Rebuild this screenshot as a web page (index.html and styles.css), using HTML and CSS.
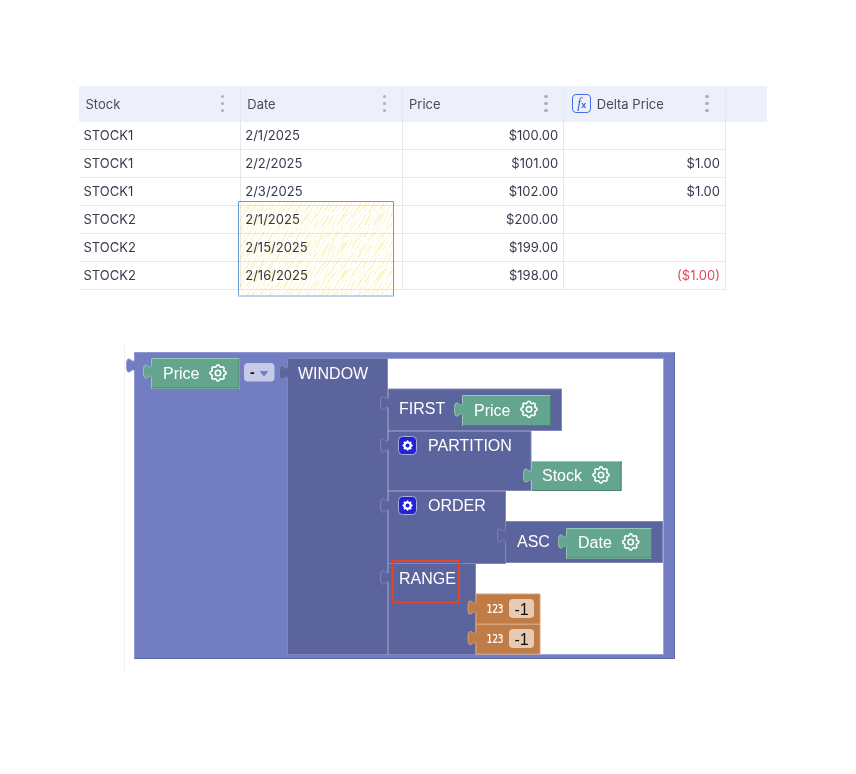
FILE: index.html
```html
<!DOCTYPE html>
<html lang="en">
<head>
<meta charset="utf-8">
<title>Delta Price</title>
<link rel="stylesheet" href="styles.css">
</head>
<body>
<section class="sheet">
  <div class="table">
    <div class="head"><span class="head-label">Stock</span><span class="dots"><i></i><i></i><i></i></span></div>
    <div class="head"><span class="head-label">Date</span><span class="dots"><i></i><i></i><i></i></span></div>
    <div class="head"><span class="head-label">Price</span><span class="dots"><i></i><i></i><i></i></span></div>
    <div class="head head-fx"><span class="fx"><em>f</em><small>x</small></span><span class="head-label">Delta Price</span><span class="dots"><i></i><i></i><i></i></span></div>
    <div class="cell">STOCK1</div><div class="cell">2/1/2025</div><div class="cell num">$100.00</div><div class="cell num"></div>
    <div class="cell">STOCK1</div><div class="cell">2/2/2025</div><div class="cell num">$101.00</div><div class="cell num">$1.00</div>
    <div class="cell">STOCK1</div><div class="cell">2/3/2025</div><div class="cell num">$102.00</div><div class="cell num">$1.00</div>
    <div class="cell">STOCK2</div><div class="cell">2/1/2025</div><div class="cell num">$200.00</div><div class="cell num"></div>
    <div class="cell">STOCK2</div><div class="cell">2/15/2025</div><div class="cell num">$199.00</div><div class="cell num"></div>
    <div class="cell">STOCK2</div><div class="cell">2/16/2025</div><div class="cell num">$198.00</div><div class="cell num neg">($1.00)</div>
  </div>
  <svg class="scribble" width="157" height="97" viewBox="0 0 157 97" aria-hidden="true">
    <defs>
      <pattern id="hatch-fine" width="9" height="13" patternUnits="userSpaceOnUse">
        <path class="hatch-fine" d="M-2 14 L7 -1M3 14 L11 1M-1 4 L1 1"/>
      </pattern>
      <pattern id="hatch-wide" width="37" height="29" patternUnits="userSpaceOnUse">
        <path class="hatch-wide" d="M3 17 L12 3M9 27 L17 14M20 12 L26 2M25 25 L33 12M31 9 L35 3M2 28 L6 22M14 8 L18 2M30 20 L36 10M16 24 L22 14"/>
      </pattern>
    </defs>
    <rect class="scribble-fine" x="1" y="1" width="154" height="94"/>
    <rect class="scribble-wide" x="1" y="1" width="154" height="94"/>
    <path class="scribble-edge" d="M0.5 94 V0.5 H155.5 V95"/>
    <path class="scribble-rough" d="M0 95 H156"/>
  </svg>
</section>

<svg class="diagram" width="856" height="340" viewBox="0 340 856 340" role="img" aria-label="Formula blocks">
  <defs>
    <path id="gear" d="M10.325 4.317c.426 -1.756 2.924 -1.756 3.35 0a1.724 1.724 0 0 0 2.573 1.066c1.543 -.94 3.31 .826 2.37 2.37a1.724 1.724 0 0 0 1.065 2.572c1.756 .426 1.756 2.924 0 3.35a1.724 1.724 0 0 0 -1.066 2.573c.94 1.543 -.826 3.31 -2.37 2.37a1.724 1.724 0 0 0 -2.572 1.065c-.426 1.756 -2.924 1.756 -3.35 0a1.724 1.724 0 0 0 -2.573 -1.066c-1.543 .94 -3.31 -.826 -2.37 -2.37a1.724 1.724 0 0 0 -1.065 -2.572c-1.756 -.426 -1.756 -2.924 0 -3.35a1.724 1.724 0 0 0 1.066 -2.573c-.94 -1.543 .826 -3.31 2.37 -2.37c1 .608 2.296 .07 2.572 -1.065z"/>
    <g id="gear-line" class="gear-line">
      <use href="#gear"/>
      <circle cx="12" cy="12" r="3"/>
    </g>
    <g id="gear-badge">
      <rect class="badge" x="0.5" y="0.5" width="18" height="18" rx="4"/>
      <g transform="translate(2.6 2.6) scale(.58)">
        <use class="gear-solid" href="#gear"/>
        <circle class="gear-hole" cx="12" cy="12" r="3.4"/>
      </g>
    </g>
  </defs>

  <line class="guide" x1="124.5" y1="345" x2="124.5" y2="672"/>

  <!-- outer minus block -->
  <path class="b-outer" d="M134.5 352.5 H674.5 V658.5 H134.5 V373 c0,-10 -8,8 -8,-7.5 s8,2.5 8,-7.5 Z"/>
  <rect class="hole" x="288" y="358.5" width="375.5" height="296"/>
  <path class="e-outer" d="M674.5 352.5 V658.5 H134.5"/>
  <path class="e-hole" d="M288 358.5 H663.5 V654.5 H288"/>

  <!-- top Price -->
  <path class="b-green" d="M151.5 358.5 H239.5 V388.5 H151.5 V379 c0,-10 -8,8 -8,-7.5 s8,2.5 8,-7.5 Z"/>
  <path class="e-green" d="M239 358.5 V388 H152"/>
  <text class="t" x="163" y="379">Price</text>
  <use href="#gear-line" transform="translate(207.2 362.2) scale(.9)"/>

  <rect class="dropdown" x="244" y="363" width="30.5" height="18.5" rx="4"/>
  <text class="t-dash" x="250" y="377">-</text>
  <path class="arrow" d="M259.5 371 H268.5 L264 376.5 Z"/>

  <!-- WINDOW -->
  <path class="b-dark" d="M287.5 358.5 H387.5 V654.5 H287.5 V380 c0,-10 -8,8 -8,-7.5 s8,2.5 8,-7.5 Z"/>
  <text class="t" x="298" y="379">WINDOW</text>

  <!-- RANGE -->
  <path class="b-dark" d="M388.5 563.5 H475.5 V654.5 H388.5 V585 c0,-10 -8,8 -8,-7.5 s8,2.5 8,-7.5 Z"/>
  <text class="t" x="399" y="584">RANGE</text>

  <!-- ORDER -->
  <path class="b-dark" d="M388.5 491.5 H505.5 V563.5 H388.5 V513 c0,-10 -8,8 -8,-7.5 s8,2.5 8,-7.5 Z"/>
  <use href="#gear-badge" transform="translate(398 496)"/>
  <text class="t" x="428" y="511">ORDER</text>

  <!-- ASC -->
  <path class="b-dark" d="M505.5 521.5 H662.5 V562.5 H505.5 V543 c0,-10 -8,8 -8,-7.5 s8,2.5 8,-7.5 Z"/>
  <text class="t" x="517" y="547">ASC</text>
  <path class="b-green" d="M566.5 528.5 H651.5 V558.5 H566.5 V549 c0,-10 -8,8 -8,-7.5 s8,2.5 8,-7.5 Z"/>
  <path class="e-green" d="M651.5 528.5 V558 H567"/>
  <text class="t" x="578" y="548">Date</text>
  <use href="#gear-line" transform="translate(619.9 531.2) scale(.9)"/>

  <!-- PARTITION -->
  <path class="b-dark" d="M388.5 431.5 H531 V490.5 H388.5 V453 c0,-10 -8,8 -8,-7.5 s8,2.5 8,-7.5 Z"/>
  <use href="#gear-badge" transform="translate(398 436)"/>
  <text class="t" x="428" y="451">PARTITION</text>
  <path class="b-green" d="M531.5 461.5 H621.5 V490.5 H531.5 V483 c0,-10 -8,8 -8,-7.5 s8,2.5 8,-7.5 Z"/>
  <path class="e-green" d="M621 461.5 V490.5 H532"/>
  <text class="t" x="542" y="481">Stock</text>
  <use href="#gear-line" transform="translate(590.2 464.2) scale(.9)"/>

  <!-- FIRST -->
  <path class="b-dark" d="M388.5 389 H561.5 V430.5 H388.5 V410.5 c0,-10 -8,8 -8,-7.5 s8,2.5 8,-7.5 Z"/>
  <text class="t" x="399" y="414">FIRST</text>
  <path class="b-green" d="M462.5 395.5 H550.5 V425.5 H462.5 V417 c0,-10 -8,8 -8,-7.5 s8,2.5 8,-7.5 Z"/>
  <path class="e-green" d="M550.5 395.5 V425.5 H463"/>
  <text class="t" x="474" y="416">Price</text>
  <use href="#gear-line" transform="translate(518.2 398.5) scale(.9)"/>

  <!-- numeric -1 blocks -->
  <path class="b-orange" d="M476 594 H540 V624 H476 V615 c0,-10 -8,8 -8,-7.5 s8,2.5 8,-7.5 Z"/>
  <text class="t-num" x="486.5" y="612.5" textLength="17" lengthAdjust="spacingAndGlyphs">123</text>
  <rect class="pill" x="509" y="599" width="25" height="19" rx="4"/>
  <text class="t-val" x="514.5" y="615">-1</text>
  <path class="b-orange" d="M476 624.5 H540 V654 H476 V645.5 c0,-10 -8,8 -8,-7.5 s8,2.5 8,-7.5 Z"/>
  <text class="t-num" x="486.5" y="642.5" textLength="17" lengthAdjust="spacingAndGlyphs">123</text>
  <rect class="pill" x="509" y="629" width="25" height="19" rx="4"/>
  <text class="t-val" x="514.5" y="645">-1</text>

  <rect class="mark" x="392.5" y="561" width="66.5" height="41.5"/>
</svg>
</body>
</html>
```

FILE: styles.css
```css
* { box-sizing: border-box; }

html, body { margin: 0; padding: 0; background: #fff; }

body {
  width: 856px;
  height: 774px;
  overflow: hidden;
  padding-top: 86px;
  font-family: Inter, "Liberation Sans", sans-serif;
}

.sheet {
  position: relative;
  margin-left: 79px;
  width: 688px;
  height: 204px;
  background: linear-gradient(#edf0f8, #edf0f8) no-repeat 0 0 / 100% 36px;
}

.table {
  display: grid;
  width: 647px;
  grid-template-columns: repeat(4, 1fr);
  grid-template-rows: 36px repeat(6, 28px);
  font-size: 13px;
  color: #35394b;
}

.head {
  display: flex;
  align-items: center;
  padding: 0 15.5px 1px 6.5px;
  border-right: 1px solid #e4e7f0;
  color: #474b5d;
}

.head-label { flex: 1; }

.head-fx { gap: 5.5px; padding-left: 8px; padding-right: 16.5px; }

.fx {
  display: flex;
  align-items: center;
  justify-content: center;
  width: 19px;
  height: 19px;
  border: 1.3px solid #4370e8;
  border-radius: 4px;
  color: #3b5fd9;
  font-family: "Liberation Serif", serif;
  line-height: 1;
}

.fx em { font-size: 14px; }
.fx small { font-size: 9px; margin-top: 3px; font-family: "Liberation Sans", sans-serif; font-weight: 700; }

.dots {
  display: flex;
  flex-direction: column;
  gap: 3.5px;
}

.dots i {
  display: block;
  width: 3.5px;
  height: 3.5px;
  border-radius: 50%;
  background: #a9aec2;
}

.cell {
  display: flex;
  align-items: center;
  padding: 0 5px 1px 4.5px;
  border-right: 1px solid #e8e8ec;
  border-bottom: 1px solid #e8e8ec;
}

.num { justify-content: flex-end; }

.neg { color: #e2485c; }

.scribble {
  position: absolute;
  left: 159px;
  top: 115px;
  display: block;
  mix-blend-mode: multiply;
}

.scribble-fine { fill: url(#hatch-fine); }
.scribble-wide { fill: url(#hatch-wide); }
.hatch-fine { fill: none; stroke: #fef3c4; stroke-width: 1; }
.hatch-wide { fill: none; stroke: #fcecaa; stroke-width: .9; }
.scribble-edge { fill: none; stroke: #6b9bcf; stroke-width: 1; }
.scribble-rough { fill: none; stroke: #a6c6e6; stroke-width: 1.5; }

.diagram {
  display: block;
  margin-top: 50px;
}

.guide { stroke: #f1f1f3; stroke-width: 1; }

.hole { fill: #fff; }

.b-outer { fill: #737dc2; stroke: #8f97d0; stroke-width: 1; }
.e-outer { fill: none; stroke: #5f68a8; stroke-width: 1; }
.e-hole { fill: none; stroke: #9ea5d8; stroke-width: 1; }

.b-dark { fill: #5b649c; stroke: #8088b8; stroke-width: 1; }

.b-green { fill: #64a590; stroke: #96c6b5; stroke-width: 1; }
.e-green { fill: none; stroke: #4d8270; stroke-width: 1; }

.b-orange { fill: #c07c47; stroke: #d6a27a; stroke-width: 1; }

.t {
  font-family: "Liberation Sans", Arial, sans-serif;
  font-size: 16px;
  fill: #fff;
}

.t-dash {
  font-family: "Liberation Sans", Arial, sans-serif;
  font-size: 14px;
  font-weight: 700;
  fill: #111;
}

.t-num {
  font-family: "DejaVu Sans Mono", monospace;
  font-size: 13px;
  fill: #fff;
  stroke: #fff;
  stroke-width: .2;
}

.t-val {
  font-family: "Liberation Sans", Arial, sans-serif;
  font-size: 16px;
  fill: #111;
}

.pill { fill: #e8c9b2; }
.dropdown { fill: #c6c9e8; }
.arrow { fill: #737dc2; }

.gear-line { fill: none; stroke: #fff; stroke-width: 1.8; stroke-linecap: round; stroke-linejoin: round; }
.gear-solid { fill: #fff; }
.gear-hole { fill: #2222cf; }
.badge { fill: #2222cf; stroke: #a9aee0; stroke-width: 1; }

.mark { fill: none; stroke: #e5432b; stroke-width: 2; }
```
